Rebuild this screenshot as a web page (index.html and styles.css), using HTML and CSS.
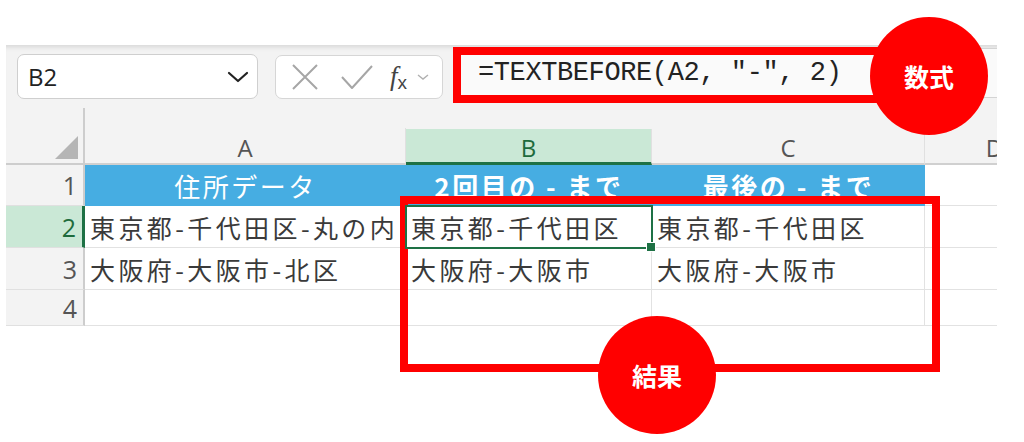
FILE: index.html
```html
<!DOCTYPE html>
<html lang="ja">
<head>
<meta charset="utf-8">
<title>TEXTBEFORE</title>
<link rel="stylesheet" href="styles.css">
</head>
<body>
<div class="stage">
  <div class="excel">
    <div class="toolbar">
      <div class="namebox">
        <span class="nb-text">B2</span>
        <svg class="nb-chev" width="22" height="14" viewBox="0 0 22 14"><path d="M2 3 L11 11 L20 3" fill="none" stroke="#222" stroke-width="2.2" stroke-linecap="round" stroke-linejoin="round"/></svg>
      </div>
      <div class="fxgroup">
        <svg class="ic-x" width="30" height="30" viewBox="0 0 30 30"><path d="M3 3 L27 27 M27 3 L3 27" stroke="#a6a6a6" stroke-width="2" fill="none"/></svg>
        <svg class="ic-check" width="34" height="28" viewBox="0 0 34 28"><path d="M2 14 L12 25 L32 3" stroke="#a6a6a6" stroke-width="2" fill="none" stroke-linejoin="round"/></svg>
        <span class="fx"><i>f</i><sub>x</sub></span>
        <svg class="ic-chev" width="12" height="8" viewBox="0 0 12 8"><path d="M1 2 L6 6 L11 2" fill="none" stroke="#b0b0b0" stroke-width="1.4"/></svg>
      </div>
      <div class="formula">=TEXTBEFORE(A2, "-", 2)</div>
    </div>
    <div class="sheet">
      <div class="corner"><span class="tri"></span></div>
      <div class="colh">A</div>
      <div class="colh sel">B</div>
      <div class="colh">C</div>
      <div class="colh">D</div>

      <div class="rowh">1</div>
      <div class="cell head">住所データ</div>
      <div class="cell head bold">2回目の - まで</div>
      <div class="cell head bold">最後の - まで</div>
      <div class="cell"></div>

      <div class="rowh sel">2</div>
      <div class="cell">東京都-千代田区-丸の内</div>
      <div class="cell active">東京都-千代田区<span class="handle"></span></div>
      <div class="cell">東京都-千代田区</div>
      <div class="cell"></div>

      <div class="rowh">3</div>
      <div class="cell">大阪府-大阪市-北区</div>
      <div class="cell">大阪府-大阪市</div>
      <div class="cell">大阪府-大阪市</div>
      <div class="cell"></div>

      <div class="rowh">4</div>
      <div class="cell"></div>
      <div class="cell"></div>
      <div class="cell"></div>
      <div class="cell"></div>
    </div>
  </div>
  <div class="mark mark-formula"></div>
  <div class="badge badge-formula">数式</div>
  <div class="mark mark-result"></div>
  <div class="badge badge-result">結果</div>
</div>
</body>
</html>
```
FILE: styles.css
```css
html, body {
  margin: 0;
  padding: 0;
  background: #ffffff;
}
body {
  font-family: "Noto Sans CJK JP", "Noto Sans", sans-serif;
}
.stage {
  position: relative;
  width: 1024px;
  height: 442px;
  overflow: hidden;
}
.excel {
  margin-top: 45px;
  margin-left: 6px;
  width: 991px;
  background: #f3f3f3;
  box-shadow: inset 0 6px 5px -4px rgba(0,0,0,0.12);
  overflow: hidden;
}
.toolbar {
  height: 83px;
  display: flex;
  align-items: flex-start;
  padding-left: 11px;
  box-sizing: border-box;
}
.namebox {
  margin-top: 9px;
  width: 241px;
  height: 45px;
  box-sizing: border-box;
  background: #fff;
  border: 1px solid #cfcfcf;
  border-radius: 7px;
  display: flex;
  align-items: center;
  justify-content: space-between;
  padding: 0 8px 0 10px;
}
.nb-text {
  font-family: "Open Sans", "Noto Sans", sans-serif;
  font-size: 24px;
  color: #222;
}
.fxgroup {
  margin-top: 10px;
  margin-left: 17px;
  width: 168px;
  height: 44px;
  box-sizing: border-box;
  background: #fff;
  border: 1px solid #d6d6d6;
  border-radius: 7px;
  display: flex;
  align-items: center;
  padding-left: 14px;
}
.ic-check { margin-left: 20px; }
.fx {
  margin-left: 16px;
  font-family: "Liberation Serif", serif;
  font-size: 27px;
  color: #444;
  line-height: 1;
}
.fx sub {
  font-family: "Liberation Sans", sans-serif;
  font-size: 19px;
  vertical-align: -4px;
}
.ic-chev { margin-left: 10px; }
.formula {
  margin-top: 3px;
  margin-left: 10px;
  flex: 1;
  height: 50px;
  box-sizing: border-box;
  background: #fafafa;
  border-top: 1px solid #d4d4d4;
  border-bottom: 1px solid #d4d4d4;
  display: flex;
  align-items: center;
  padding-left: 25px;
  font-family: "Liberation Mono", monospace;
  font-size: 27px;
  color: #222;
  letter-spacing: -0.4px;
}
.sheet {
  display: grid;
  grid-template-columns: 79px 321px 246px 273px 140px;
  grid-template-rows: 37px 41px 42px 42px 36px;
}
.corner {
  position: relative;
  background: #f3f3f3;
  border-right: 2px solid #cdcdcd;
  border-bottom: 2px solid #cdcdcd;
  box-sizing: border-box;
}
.corner::before {
  content: "";
  position: absolute;
  right: -2px;
  top: -20px;
  width: 2px;
  height: 20px;
  background: #cdcdcd;
}
.tri {
  position: absolute;
  right: 5px;
  bottom: 4px;
  width: 0;
  height: 0;
  border-left: 23px solid transparent;
  border-bottom: 23px solid #b5b5b5;
}
.colh {
  background: #f3f3f3;
  border-right: 1px solid #e0e0e0;
  border-bottom: 2px solid #d0d0d0;
  box-sizing: border-box;
  display: flex;
  align-items: center;
  justify-content: center;
  font-family: "Open Sans", "Noto Sans", sans-serif;
  font-size: 24px;
  color: #555;
  padding-top: 3px;
}
.colh.sel {
  background: #cae8d6;
  color: #1e6b3c;
  border-bottom: 3px solid #1e7145;
  margin-top: 1px;
}
.rowh {
  background: #f3f3f3;
  border-right: 2px solid #cdcdcd;
  border-bottom: 1px solid #e0e0e0;
  box-sizing: border-box;
  display: flex;
  align-items: center;
  justify-content: flex-end;
  padding-right: 6px;
  font-family: "Open Sans", "Noto Sans", sans-serif;
  font-size: 25px;
  color: #555;
}
.rowh.sel {
  background: #cae8d6;
  color: #1e6b3c;
  border-right: 3px solid #1e7145;
}
.cell {
  position: relative;
  background: #fff;
  border-right: 1px solid #e2e2e2;
  border-bottom: 1px solid #e2e2e2;
  box-sizing: border-box;
  display: flex;
  align-items: center;
  padding-left: 5px;
  font-size: 25px;
  letter-spacing: 3.4px;
  color: #3a3a3a;
  white-space: nowrap;
  overflow: hidden;
}
.cell.head {
  background: #46ade2;
  color: #fff;
  justify-content: center;
  padding-left: 0;
  border-right: none;
  border-bottom: none;
  font-size: 26px;
  letter-spacing: 2.5px;
}
.cell.bold { font-weight: 700; }
.cell.active {
  overflow: visible;
  outline: 2px solid #1e7145;
  outline-offset: -1px;
  z-index: 1;
}
.handle {
  position: absolute;
  right: -5px;
  bottom: -5px;
  width: 8px;
  height: 8px;
  background: #1e7145;
  border: 1px solid #fff;
}
.mark {
  position: absolute;
  border: 8px solid #ff0000;
  box-sizing: border-box;
}
.mark-formula {
  left: 453px;
  top: 47px;
  width: 520px;
  height: 56px;
}
.mark-result {
  left: 400px;
  top: 196px;
  width: 540px;
  height: 176px;
}
.badge {
  position: absolute;
  width: 118px;
  height: 118px;
  border-radius: 50%;
  background: #ff0000;
  color: #fff;
  font-weight: 700;
  font-size: 25px;
  display: flex;
  align-items: center;
  justify-content: center;
}
.badge-formula {
  left: 870px;
  top: 17px;
}
.badge-result {
  left: 598px;
  top: 316px;
}
```
